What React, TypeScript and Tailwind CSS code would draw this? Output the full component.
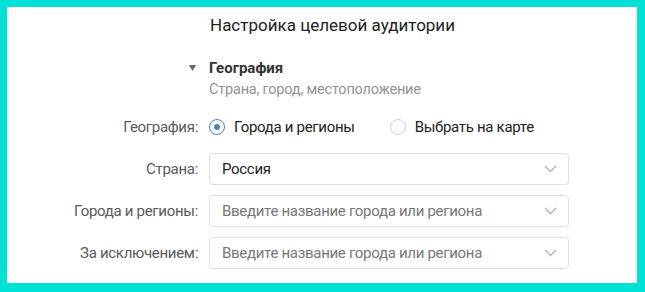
const font = { fontFamily: "Roboto, 'Noto Sans', sans-serif" }

const Chevron = () => (
    <svg width="13" height="8" viewBox="0 0 13 8" fill="none">
        <polyline points="1,1 6.5,6.5 12,1" stroke="#aeb4ba" strokeWidth="1.3" />
    </svg>
)

const Radio = ({ checked, label }: { checked?: boolean; label: string }) => (
    <label className="flex items-center">
        <span
            className={`flex items-center justify-center w-[16px] h-[16px] rounded-full border-[1.5px] ${checked ? "border-[#5181b8]" : "border-[#c5d0db]"}`}
        >
            {checked && <span className="w-[6px] h-[6px] rounded-full bg-[#5181b8]" />}
        </span>
        <span className="ml-[9px] text-[15px] tracking-[-0.3px] text-[#222]">{label}</span>
    </label>
)

const Select = ({ value, placeholder }: { value?: string; placeholder?: string }) => (
    <div className="flex items-center justify-between w-[360px] h-[32px] border border-[#dce1e6] rounded-[4px] pl-[12px] pr-[11px]">
        <span className={`text-[15px] tracking-[-0.3px] ${value ? "text-[#222]" : "text-[#777]"}`}>{value ?? placeholder}</span>
        <Chevron />
    </div>
)

const Row = ({ label, children }: { label: string; children: React.ReactNode }) => (
    <div className="flex items-center h-[32px]">
        <div className="w-[191px] text-right text-[15px] tracking-[-0.3px] text-[#5a5a5a]">{label}</div>
        <div className="ml-[11px]">{children}</div>
    </div>
)

export default function App() {
    return (
        <div className="w-[645px] h-[292px] bg-[#00e1d6] pt-[7px] pl-[7px] pr-[8px] pb-[9px]" style={font}>
            <div className="w-full h-full bg-white">
                {/* Title */}
                <div className="pt-[6px] pl-[203px] h-[30px] text-[17px] leading-[24px] text-[#222]">
                    Настройка целевой аудитории
                </div>

                {/* Section header */}
                <div className="mt-[21px] pl-[182px] flex items-center h-[20px]">
                    <svg width="7" height="6" viewBox="0 0 7 6" className="mr-[13px]">
                        <polygon points="0,0 7,0 3.5,6" fill="#666" />
                    </svg>
                    <span className="text-[15px] font-bold text-[#333]">География</span>
                </div>
                <div className="mt-[2px] pl-[202px] h-[20px] text-[14.5px] tracking-[-0.2px] leading-[20px] text-[#939393]">
                    Страна, город, местоположение
                </div>

                {/* Form */}
                <div className="mt-[11px] flex flex-col gap-[10px]">
                    <Row label="География:">
                        <div className="flex items-center gap-[35px]">
                            <Radio checked label="Города и регионы" />
                            <Radio label="Выбрать на карте" />
                        </div>
                    </Row>
                    <Row label="Страна:">
                        <Select value="Россия" />
                    </Row>
                    <Row label="Города и регионы:">
                        <Select placeholder="Введите название города или региона" />
                    </Row>
                    <Row label="За исключением:">
                        <Select placeholder="Введите название города или региона" />
                    </Row>
                </div>
            </div>
        </div>
    )
}
